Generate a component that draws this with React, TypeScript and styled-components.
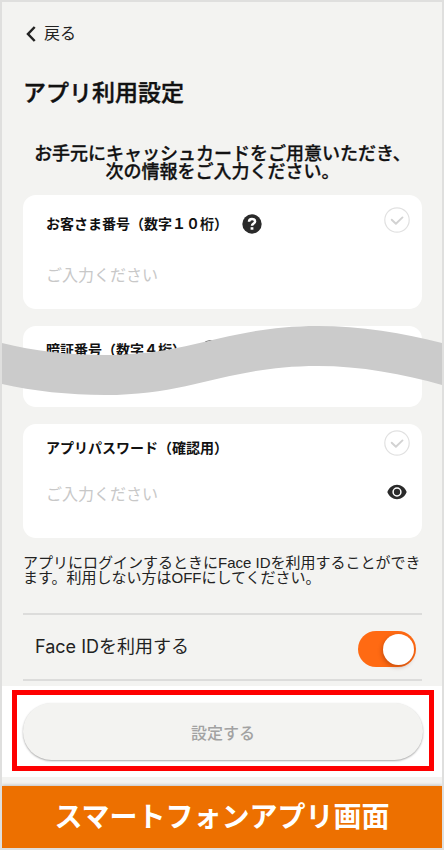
import React from "react";
import styled, { createGlobalStyle } from "styled-components";

const GlobalStyle = createGlobalStyle`
  *, *::before, *::after { box-sizing: border-box; }
  body {
    margin: 0;
    background: #f3f3f1;
    color: #111;
    font-family: "Liberation Sans", "Noto Sans CJK JP", sans-serif;
  }
  button, input { font: inherit; }
`;

const Screen = styled.div`
  border: 2px solid #dfdfde;
  background: #f3f3f1;
  overflow: hidden;
`;

const Content = styled.main`
  padding: 20px 20px 5px 21px;
`;

const BackLink = styled.a`
  display: inline-flex;
  align-items: center;
  gap: 8px;
  padding-left: 3px;
  color: #222;
  font-size: 16px;
  line-height: 24px;
  text-decoration: none;
`;

const Title = styled.h1`
  margin: 31px 0 0;
  font-size: 23px;
  line-height: 32px;
  font-weight: 500;
  -webkit-text-stroke: 0.4px currentColor;
`;

const Lead = styled.p`
  margin: 36px 0 14px;
  font-size: 18px;
  line-height: 18px;
  font-weight: 500;
  text-align: center;
  white-space: nowrap;
  -webkit-text-stroke: 0.3px currentColor;
`;

const Fields = styled.div`
  position: relative;
  display: flex;
  flex-direction: column;
  gap: 17px;
`;

const Card = styled.section<{ $compact?: boolean }>`
  display: flex;
  justify-content: space-between;
  min-height: 81px;
  padding: ${(p) => (p.$compact ? "14px 12px 31px 23px" : "19px 12px 21px 23px")};
  border-radius: 13px;
  background: #fff;
`;

const CardMain = styled.div<{ $compact?: boolean }>`
  display: flex;
  flex: 1;
  flex-direction: column;
  gap: ${(p) => (p.$compact ? 25 : 30)}px;
  min-width: 0;
`;

const CardSide = styled.div<{ $lift: number }>`
  display: flex;
  flex-direction: column;
  align-items: center;
  gap: 24px;
  margin-top: -${(p) => p.$lift}px;
`;

const LabelRow = styled.div`
  display: flex;
  align-items: center;
  gap: 14px;
  height: 20px;
`;

const Label = styled.label`
  font-size: 14px;
  line-height: 20px;
  font-weight: 700;
  white-space: nowrap;
`;

const TextInput = styled.input`
  width: 100%;
  height: 24px;
  padding: 0;
  border: 0;
  outline: 0;
  background: transparent;
  color: #222;
  font-size: 16px;
  line-height: 24px;

  &::placeholder {
    color: #c8c8c8;
    opacity: 1;
  }
`;

const IconButton = styled.button`
  display: flex;
  padding: 0;
  border: 0;
  background: none;
  color: #2a2a2a;
  cursor: pointer;
`;

const Wave = styled.svg`
  position: absolute;
  top: 130px;
  left: -21px;
  width: calc(100% + 41px);
  height: 72px;
  pointer-events: none;
`;

const Note = styled.p`
  margin: 17px 0 28px;
  color: #222;
  font-size: 15px;
  line-height: 15px;
  white-space: nowrap;
`;

const SwitchRow = styled.div`
  display: flex;
  align-items: center;
  justify-content: space-between;
  height: 68px;
  padding: 4px 6px 0 12px;
  border-top: 2px solid #dcdcdb;
  border-bottom: 2px solid #dcdcdb;
`;

const SwitchLabel = styled.label`
  padding-bottom: 4px;
  color: #222;
  font-family: Inter, "Noto Sans CJK JP", sans-serif;
  font-size: 18px;
  line-height: 28px;
`;

const Switch = styled.input`
  display: flex;
  align-items: center;
  width: 58px;
  height: 36px;
  margin: 0;
  padding: 2px;
  border-radius: 18px;
  background: #ccc;
  appearance: none;
  cursor: pointer;

  &::before {
    content: "";
    width: 31px;
    height: 31px;
    border-radius: 50%;
    background: #fff;
    box-shadow: -1px 2px 4px rgba(100, 30, 0, 0.35);
  }

  &:checked {
    justify-content: flex-end;
    background: #ff6a13;
  }
`;

const ActionPanel = styled.div`
  padding: 4px 8px 6px 10px;
  background: #fff;
`;

const Highlight = styled.div`
  padding: 8px 6px 6px;
  border: 5px solid #fe0000;
`;

const SubmitButton = styled.button`
  display: block;
  width: 100%;
  height: 57px;
  padding: 0;
  border: 0;
  border-radius: 29px;
  background: #f3f3f1;
  box-shadow: 0 1px 2px rgba(0, 0, 0, 0.35);
  color: #a2a2a2;
  font-size: 16px;
  font-weight: 500;
`;

const Caption = styled.footer`
  margin-top: 9px;
  padding-top: 2px;
  background: #ed7000;
  box-shadow: 0 -1px 3px rgba(0, 0, 0, 0.2);
  color: #fff;
  font-size: 28px;
  line-height: 60px;
  font-weight: 700;
  text-align: center;
  white-space: nowrap;
`;

const HelpButton = ({ label }: { label: string }) => (
  <IconButton type="button" aria-label={label}>
    <svg width="20" height="20" viewBox="0 0 20 20" fill="none">
      <circle cx="10" cy="10" r="9.7" fill="currentColor" />
      <path
        d="M7 7.8C7 5.9 8.2 5 10 5s3.1.9 3.1 2.5c0 2-3.1 2-3.1 4.3"
        stroke="#fff"
        strokeWidth="2.5"
      />
      <rect x="8.6" y="13.2" width="2.8" height="2.5" fill="#fff" />
    </svg>
  </IconButton>
);

const StatusCheck = () => (
  <svg width="26" height="26" viewBox="0 0 26 26" fill="none" aria-hidden="true">
    <circle cx="13" cy="13" r="12.2" stroke="#e1e1e1" strokeWidth="1.2" />
    <path
      d="M7.7 12.7l4.2 4.1 6.6-6.4"
      stroke="#d2d2d2"
      strokeWidth="1.9"
      strokeLinecap="round"
      strokeLinejoin="round"
    />
  </svg>
);

const EyeIcon = () => (
  <svg width="24" height="24" viewBox="0 0 24 24" fill="none">
    <path
      d="M2.3 12C4 7.700 7.700 4.800 12 4.800s8 2.900 9.700 7.200c-1.700 4.300-5.400 7.200-9.700 7.200S4 16.300 2.300 12z"
      fill="currentColor"
    />
    <circle cx="12" cy="12" r="3.900" stroke="#fff" strokeWidth="1.500" />
  </svg>
);

export default function App() {
  return (
    <>
      <GlobalStyle />
      <Screen>
        <Content>
          <BackLink href="#back">
            <svg width="10" height="16" viewBox="0 0 10 16" fill="none" aria-hidden="true">
              <path d="M8.700 1L2 8l6.700 7" stroke="currentColor" strokeWidth="2.500" />
            </svg>
            戻る
          </BackLink>
          <Title>アプリ利用設定</Title>
          <Lead>
            お手元にキャッシュカードをご用意いただき、
            <br />
            次の情報をご入力ください。
          </Lead>
          <Fields>
            <Card>
              <CardMain>
                <LabelRow>
                  <Label htmlFor="customer">お客さま番号（数字１０桁）</Label>
                  <HelpButton label="お客さま番号について" />
                </LabelRow>
                <TextInput id="customer" inputMode="numeric" placeholder="ご入力ください" />
              </CardMain>
              <CardSide $lift={7}>
                <StatusCheck />
              </CardSide>
            </Card>
            <Card $compact>
              <CardMain $compact>
                <LabelRow>
                  <Label as="span">暗証番号（数字４桁）</Label>
                  <HelpButton label="暗証番号について" />
                </LabelRow>
              </CardMain>
            </Card>
            <Card $compact>
              <CardMain $compact>
                <LabelRow>
                  <Label htmlFor="password">アプリパスワード（確認用）</Label>
                </LabelRow>
                <TextInput id="password" type="password" placeholder="ご入力ください" />
              </CardMain>
              <CardSide $lift={8}>
                <StatusCheck />
                <IconButton type="button" aria-label="パスワードを表示">
                  <EyeIcon />
                </IconButton>
              </CardSide>
            </Card>
            <Wave viewBox="0 0 440 72" preserveAspectRatio="none" aria-hidden="true">
              <path
                d="M0 18C31 26 67 30 103 30C190 30 225 1 316 1C358 1 402 8 440 18V60C402 49 358 41 316 41C225 41 190 70 103 70C67 70 31 66 0 59Z"
                fill="#cbcbcb"
              />
            </Wave>
          </Fields>
          <Note>
            アプリにログインするときにFace IDを利用することができ
            <br />
            ます。利用しない方はOFFにしてください。
          </Note>
          <SwitchRow>
            <SwitchLabel htmlFor="faceid">Face IDを利用する</SwitchLabel>
            <Switch id="faceid" type="checkbox" role="switch" defaultChecked />
          </SwitchRow>
        </Content>
        <ActionPanel>
          <Highlight>
            <SubmitButton type="button">設定する</SubmitButton>
          </Highlight>
        </ActionPanel>
        <Caption>スマートフォンアプリ画面</Caption>
      </Screen>
    </>
  );
}
